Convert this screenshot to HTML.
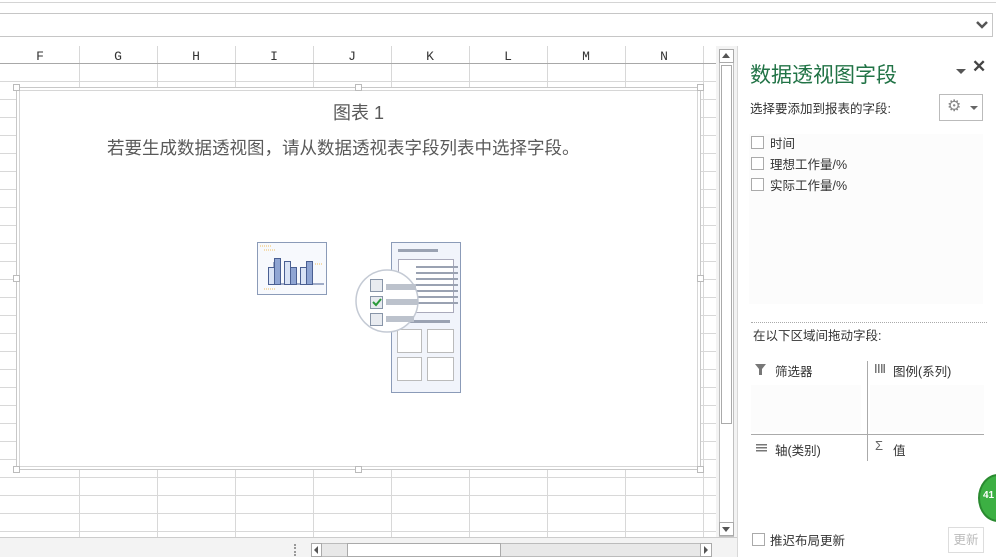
<!DOCTYPE html>
<html><head><meta charset="utf-8"><style>
*{margin:0;padding:0;box-sizing:border-box}
body{width:996px;height:557px;overflow:hidden;background:#fff;font-family:"Liberation Sans","Noto Sans CJK SC",sans-serif;position:relative;color:#444}
.a{position:absolute}
.cb{position:absolute;width:13px;height:13px;border:1px solid #aaa;background:#fff}
.t{position:absolute;font-size:12.5px;color:#333;white-space:nowrap}
</style></head><body>
<div class="a" style="left:0;top:2px;width:996px;height:1px;background:#d4d4d4"></div>
<div class="a" style="left:-2px;top:13px;width:995px;height:24px;border:1px solid #c6c6c6;background:#fff"></div>
<svg class="a" style="left:976px;top:20px" width="12" height="10"><path d="M1 2 L6 7 L11 2" stroke="#555" stroke-width="2.5" fill="none"/></svg>

<svg class="a" style="left:0;top:46px" width="718" height="491">
<rect x="0" y="0" width="718" height="18" fill="#fff"/>
<g stroke="#d8d8d8" stroke-width="1">
<line x1="79.5" y1="0" x2="79.5" y2="491"/><line x1="157.5" y1="0" x2="157.5" y2="491"/><line x1="235.5" y1="0" x2="235.5" y2="491"/><line x1="313.5" y1="0" x2="313.5" y2="491"/><line x1="391.5" y1="0" x2="391.5" y2="491"/><line x1="469.5" y1="0" x2="469.5" y2="491"/><line x1="547.5" y1="0" x2="547.5" y2="491"/><line x1="625.5" y1="0" x2="625.5" y2="491"/><line x1="703.5" y1="0" x2="703.5" y2="491"/>
<line x1="0" y1="35.5" x2="718" y2="35.5"/><line x1="0" y1="53.5" x2="718" y2="53.5"/><line x1="0" y1="71.5" x2="718" y2="71.5"/><line x1="0" y1="89.5" x2="718" y2="89.5"/><line x1="0" y1="107.5" x2="718" y2="107.5"/><line x1="0" y1="125.5" x2="718" y2="125.5"/><line x1="0" y1="143.5" x2="718" y2="143.5"/><line x1="0" y1="161.5" x2="718" y2="161.5"/><line x1="0" y1="179.5" x2="718" y2="179.5"/><line x1="0" y1="197.5" x2="718" y2="197.5"/><line x1="0" y1="215.5" x2="718" y2="215.5"/><line x1="0" y1="233.5" x2="718" y2="233.5"/><line x1="0" y1="251.5" x2="718" y2="251.5"/><line x1="0" y1="269.5" x2="718" y2="269.5"/><line x1="0" y1="287.5" x2="718" y2="287.5"/><line x1="0" y1="305.5" x2="718" y2="305.5"/><line x1="0" y1="323.5" x2="718" y2="323.5"/><line x1="0" y1="341.5" x2="718" y2="341.5"/><line x1="0" y1="359.5" x2="718" y2="359.5"/><line x1="0" y1="377.5" x2="718" y2="377.5"/><line x1="0" y1="395.5" x2="718" y2="395.5"/><line x1="0" y1="413.5" x2="718" y2="413.5"/><line x1="0" y1="431.5" x2="718" y2="431.5"/><line x1="0" y1="449.5" x2="718" y2="449.5"/><line x1="0" y1="467.5" x2="718" y2="467.5"/><line x1="0" y1="485.5" x2="718" y2="485.5"/>
</g>
<line x1="0" y1="17.5" x2="718" y2="17.5" stroke="#a8a8a8"/>
<g font-family="Liberation Mono,monospace" font-size="13" fill="#333" text-anchor="middle">
<text x="40" y="14">F</text><text x="118" y="14">G</text><text x="196" y="14">H</text><text x="274" y="14">I</text><text x="352" y="14">J</text><text x="430" y="14">K</text><text x="508" y="14">L</text><text x="586" y="14">M</text><text x="664" y="14">N</text>
</g>
</svg>

<div class="a" style="left:16px;top:87px;width:685px;height:383px;border:1px solid #c8c8c8;background:#fff"></div>
<div class="a" style="left:19px;top:90px;width:679px;height:377px;border:1px solid #d6d6d6;background:#fff"></div>
<svg class="a" style="left:0;top:0" width="718" height="500">
<g fill="#fff" stroke="#bbb">
<rect x="13.5" y="84.5" width="6" height="6"/><rect x="355.5" y="84.5" width="6" height="6"/><rect x="697.5" y="84.5" width="6" height="6"/>
<rect x="13.5" y="275.5" width="6" height="6"/><rect x="697.5" y="275.5" width="6" height="6"/>
<rect x="13.5" y="466.5" width="6" height="6"/><rect x="355.5" y="466.5" width="6" height="6"/><rect x="697.5" y="466.5" width="6" height="6"/>
</g></svg>
<div class="t" style="left:333px;top:99px;font-size:18px;color:#595959">图表 1</div>
<div class="t" style="left:107px;top:135px;font-size:17.5px;color:#595959">若要生成数据透视图，请从数据透视表字段列表中选择字段。</div>

<svg class="a" style="left:250px;top:238px" width="220" height="160">
<rect x="7.5" y="4.5" width="69" height="52" fill="#f7f9fd" stroke="#8b9bb8"/>
<path d="M24 24 V46 H74" stroke="#4a5f92" fill="none"/>
<g stroke="#4a5f92" stroke-width="1"><rect x="18.5" y="29.5" width="6" height="17" fill="#d9e3f5"/><rect x="24.5" y="20.5" width="6" height="26" fill="#8fa5d3"/><rect x="34.5" y="23.5" width="6" height="23" fill="#d9e3f5"/><rect x="40.5" y="29.5" width="6" height="17" fill="#8fa5d3"/><rect x="50.5" y="29.5" width="6" height="17" fill="#d9e3f5"/><rect x="56.5" y="23.5" width="6" height="23" fill="#8fa5d3"/></g>
<g stroke="#f0c060" stroke-dasharray="1 1"><line x1="10" y1="8" x2="22" y2="8"/><line x1="14" y1="12" x2="26" y2="12"/><line x1="65" y1="26" x2="73" y2="26"/><line x1="14" y1="51" x2="26" y2="51"/></g>
<rect x="141.5" y="4.5" width="69" height="150" fill="#f1f4fb" stroke="#8b9bb8"/>
<rect x="148" y="11" width="40" height="3" fill="#9aa2b2"/>
<rect x="148.5" y="21.5" width="55" height="53" fill="#fff" stroke="#aab"/>
<g fill="#9aa2b2"><rect x="166" y="28" width="42" height="2"/><rect x="166" y="34" width="42" height="2"/><rect x="166" y="40" width="42" height="2"/><rect x="166" y="46" width="42" height="2"/><rect x="166" y="52" width="42" height="2"/><rect x="166" y="58" width="42" height="2"/><rect x="166" y="64" width="42" height="2"/><rect x="160" y="82" width="40" height="3"/></g>
<g fill="#fff" stroke="#bbb"><rect x="147.5" y="91.5" width="24" height="23"/><rect x="177.5" y="91.5" width="26" height="23"/><rect x="147.5" y="119.5" width="24" height="23"/><rect x="177.5" y="119.5" width="26" height="23"/></g>
<circle cx="137" cy="63" r="31" fill="#fff" stroke="#c4cad4" stroke-width="1.5"/>
<g fill="#e8ebf0" stroke="#8895a8"><rect x="120.5" y="41.5" width="12" height="12"/><rect x="120.5" y="58.5" width="12" height="12"/><rect x="120.5" y="75.5" width="12" height="12"/></g>
<path d="M123 64 L126 67 L131 61" stroke="#2a9a3a" stroke-width="2" fill="none"/>
<g fill="#bcc2cc"><rect x="136" y="46" width="30" height="6"/><rect x="136" y="61" width="32" height="6"/><rect x="136" y="78" width="28" height="6"/></g>
</svg>

<div class="a" style="left:716px;top:46px;width:22px;height:491px;background:#f3f3f3"></div>
<div class="a" style="left:719px;top:49px;width:15px;height:488px;background:#fff;border:1px solid #c0c0c0"></div>
<div class="a" style="left:719px;top:49px;width:15px;height:14px;border:1px solid #aaa;background:#fff"></div>
<div class="a" style="left:722px;top:53px;border:4px solid transparent;border-bottom:5px solid #555;border-top:0"></div>
<div class="a" style="left:721px;top:65px;width:11px;height:359px;border:1px solid #aaa;background:#fff"></div>
<div class="a" style="left:719px;top:522px;width:15px;height:14px;border:1px solid #aaa;background:#fff"></div>
<div class="a" style="left:722px;top:527px;border:4px solid transparent;border-top:5px solid #555;border-bottom:0"></div>
<div class="a" style="left:0;top:537px;width:738px;height:20px;background:#f3f3f3;border-top:1px solid #ccc"></div>
<div class="a" style="left:294px;top:544px;width:2px;height:12px;border-left:2px dotted #999"></div>
<div class="a" style="left:311px;top:543px;width:395px;height:14px;background:#e8e8e8;border:1px solid #bbb"></div>
<div class="a" style="left:311px;top:543px;width:11px;height:14px;background:#fff;border:1px solid #aaa"></div>
<div class="a" style="left:314px;top:546px;border:4px solid transparent;border-right:4px solid #555;border-left:0"></div>
<div class="a" style="left:347px;top:543px;width:154px;height:14px;background:#fff;border:1px solid #aaa"></div>
<div class="a" style="left:700px;top:543px;width:12px;height:14px;background:#fff;border:1px solid #aaa"></div>
<div class="a" style="left:704px;top:546px;border:4px solid transparent;border-left:4px solid #555;border-right:0"></div>

<div class="a" style="left:737px;top:46px;width:1px;height:511px;background:#d8d8d8"></div>
<div class="t" style="left:750px;top:59px;font-size:21px;color:#217346">数据透视图字段</div>
<div class="a" style="left:956px;top:69px;border:5px solid transparent;border-top:5px solid #555;border-bottom:0"></div>
<div class="t" style="left:972px;top:57px;font-size:17px;color:#444;font-weight:bold">✕</div>
<div class="t" style="left:750px;top:98px;font-size:12.5px">选择要添加到报表的字段:</div>
<div class="a" style="left:939px;top:94px;width:44px;height:27px;border:1px solid #bbb;background:#fff"></div>
<div class="t" style="left:947px;top:96px;font-size:16px;color:#888">⚙</div>
<div class="a" style="left:970px;top:106px;border:4px solid transparent;border-top:4px solid #666;border-bottom:0"></div>
<div class="a" style="left:749px;top:134px;width:234px;height:170px;background:#fcfcfc"></div>
<div class="cb" style="left:751px;top:136px"></div><div class="t" style="left:770px;top:133px">时间</div>
<div class="cb" style="left:751px;top:157px"></div><div class="t" style="left:770px;top:154px">理想工作量/%</div>
<div class="cb" style="left:751px;top:178px"></div><div class="t" style="left:770px;top:175px">实际工作量/%</div>
<div class="a" style="left:751px;top:322px;width:236px;border-top:1px dotted #aaa"></div>
<div class="t" style="left:753px;top:325px">在以下区域间拖动字段:</div>
<div class="a" style="left:751px;top:385px;width:110px;height:47px;background:#fcfcfc"></div>
<div class="a" style="left:870px;top:385px;width:114px;height:47px;background:#fcfcfc"></div>
<div class="a" style="left:867px;top:361px;width:1px;height:100px;background:#aaa"></div>
<div class="a" style="left:751px;top:434px;width:233px;height:1px;background:#aaa"></div>
<svg class="a" style="left:755px;top:364px" width="12" height="12"><path d="M0 0 H11 L7 5 V11 H4 V5 Z" fill="#777"/></svg>
<div class="t" style="left:775px;top:361px">筛选器</div>
<svg class="a" style="left:875px;top:364px" width="10" height="10"><g fill="#777"><rect x="0" width="1.5" height="9"/><rect x="3" width="1.5" height="9"/><rect x="6" width="1.5" height="9"/><rect x="8.5" width="1.5" height="9"/></g></svg>
<div class="t" style="left:893px;top:361px">图例(系列)</div>
<svg class="a" style="left:756px;top:444px" width="11" height="9"><g fill="#777"><rect y="0" width="11" height="1.5"/><rect y="3" width="11" height="1.5"/><rect y="6" width="11" height="1.5"/></g></svg>
<div class="t" style="left:775px;top:440px">轴(类别)</div>
<div class="t" style="left:875px;top:438px;color:#666;font-size:13px">Σ</div>
<div class="t" style="left:893px;top:440px">值</div>
<div class="a" style="left:978px;top:474px;width:40px;height:48px;border-radius:50%;background:#3cb043;border:2px solid #2a8a30"></div>
<div class="t" style="left:983px;top:490px;font-size:10px;color:#fff;font-weight:bold">41</div>
<div class="cb" style="left:752px;top:533px"></div><div class="t" style="left:770px;top:530px">推迟布局更新</div>
<div class="a" style="left:948px;top:527px;width:36px;height:26px;border:1px solid #ddd;color:#bbb;font-size:12.5px;text-align:center;line-height:24px">更新</div>
</body></html>
